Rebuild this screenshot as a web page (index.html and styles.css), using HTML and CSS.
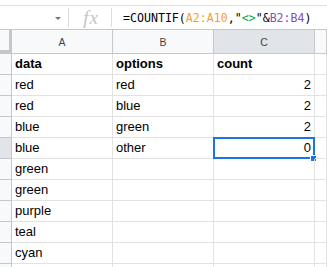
FILE: index.html
```html
<!DOCTYPE html>
<html lang="en">
<head>
  <meta charset="UTF-8">
  <meta name="viewport" content="width=device-width, initial-scale=1.0">
  <title>Sheet - COUNTIF</title>
  <link rel="stylesheet" href="styles.css">
</head>
<body>
  <div class="top-strip"></div>

  <div class="formula-bar">
    <div class="name-box"><span class="caret"></span></div>
    <div class="fx">fx</div>
    <div class="formula">=COUNTIF(<span class="ref-a">A2:A10</span>,"<span class="str">&lt;&gt;</span>"&amp;<span class="ref-b">B2:B4</span>)</div>
  </div>

  <div class="sheet">
    <div class="row head">
      <div class="corner"></div>
      <div class="col-h">A</div>
      <div class="col-h">B</div>
      <div class="col-h selected">C</div>
      <div class="col-h"></div>
    </div>

    <div class="row">
      <div class="row-h"></div>
      <div class="cell bold">data</div>
      <div class="cell bold">options</div>
      <div class="cell bold">count</div>
      <div class="cell"></div>
    </div>
    <div class="row">
      <div class="row-h"></div>
      <div class="cell">red</div>
      <div class="cell">red</div>
      <div class="cell num">2</div>
      <div class="cell"></div>
    </div>
    <div class="row">
      <div class="row-h"></div>
      <div class="cell">red</div>
      <div class="cell">blue</div>
      <div class="cell num">2</div>
      <div class="cell"></div>
    </div>
    <div class="row">
      <div class="row-h"></div>
      <div class="cell">blue</div>
      <div class="cell">green</div>
      <div class="cell num">2</div>
      <div class="cell"></div>
    </div>
    <div class="row">
      <div class="row-h selected"></div>
      <div class="cell">blue</div>
      <div class="cell">other</div>
      <div class="cell num active">0<span class="handle"></span></div>
      <div class="cell"></div>
    </div>
    <div class="row">
      <div class="row-h"></div>
      <div class="cell">green</div>
      <div class="cell"></div>
      <div class="cell"></div>
      <div class="cell"></div>
    </div>
    <div class="row">
      <div class="row-h"></div>
      <div class="cell">green</div>
      <div class="cell"></div>
      <div class="cell"></div>
      <div class="cell"></div>
    </div>
    <div class="row">
      <div class="row-h"></div>
      <div class="cell">purple</div>
      <div class="cell"></div>
      <div class="cell"></div>
      <div class="cell"></div>
    </div>
    <div class="row">
      <div class="row-h"></div>
      <div class="cell">teal</div>
      <div class="cell"></div>
      <div class="cell"></div>
      <div class="cell"></div>
    </div>
    <div class="row">
      <div class="row-h"></div>
      <div class="cell">cyan</div>
      <div class="cell"></div>
      <div class="cell"></div>
      <div class="cell"></div>
    </div>
    <div class="row">
      <div class="row-h"></div>
      <div class="cell"></div>
      <div class="cell"></div>
      <div class="cell"></div>
      <div class="cell"></div>
    </div>
  </div>
</body>
</html>
```

FILE: styles.css
```css
* {
  box-sizing: border-box;
  margin: 0;
  padding: 0;
}

body {
  font-family: 'Liberation Sans', Arial, sans-serif;
  background-color: #ffffff;
  width: 327px;
  height: 267px;
  overflow: hidden;
}

.top-strip {
  height: 5px;
}

/* formula bar */
.formula-bar {
  height: 25px;
  display: flex;
  align-items: center;
  border-top: 1px solid #e0e0e0;
  border-bottom: 1px solid #c7c7c7;
}

.name-box {
  width: 69px;
  height: 19px;
  display: flex;
  align-items: center;
  justify-content: flex-end;
  padding-right: 7px;
  border-right: 1px solid #dadce0;
}

.caret {
  width: 0;
  height: 0;
  border-left: 3px solid transparent;
  border-right: 3px solid transparent;
  border-top: 3px solid #777;
  margin-top: 2px;
}

.fx {
  width: 43px;
  height: 19px;
  display: flex;
  align-items: center;
  justify-content: center;
  padding-left: 2px;
  border-right: 1px solid #dadce0;
  font-family: 'Liberation Serif', serif;
  font-style: italic;
  font-size: 19px;
  color: #c4c4c4;
  letter-spacing: 1px;
}

.formula {
  padding-left: 11px;
  font-family: 'DejaVu Sans Mono', monospace;
  font-size: 11.6px;
  color: #000;
  white-space: nowrap;
}

.ref-a {
  color: #f6a21d;
}

.str {
  color: #12a53a;
}

.ref-b {
  color: #8a4fbf;
}

/* grid */
.sheet {
  height: 237px;
  overflow: hidden;
}

.row {
  display: grid;
  grid-template-columns: 12px 101px 101px 101px 1fr;
  height: 21px;
}

.row.head {
  height: 24px;
}

.corner {
  background-color: #f8f9fa;
  border-right: 3px solid #c4c7c5;
  border-bottom: 4px solid #c4c7c5;
}

.col-h {
  display: flex;
  align-items: center;
  justify-content: center;
  background-color: #f8f9fa;
  border-right: 1px solid #c7c7c7;
  border-bottom: 1px solid #c7c7c7;
  font-size: 10.5px;
  color: #444;
}

.col-h.selected {
  background-color: #e1e4e8;
}

.row-h {
  background-color: #f8f9fa;
  border-right: 1px solid #c7c7c7;
  border-bottom: 1px solid #c7c7c7;
}

.row-h.selected {
  background-color: #e1e4e8;
}

.cell {
  position: relative;
  border-right: 1px solid #e2e2e2;
  border-bottom: 1px solid #e2e2e2;
  padding: 0 3px;
  font-size: 13px;
  line-height: 20px;
  color: #000;
  white-space: nowrap;
}

.cell.bold {
  font-weight: bold;
}

.cell.num {
  text-align: right;
}

.cell.active::before {
  content: '';
  position: absolute;
  top: -1px;
  left: -1px;
  right: -1px;
  bottom: -1px;
  border: 2px solid #1a73e8;
}

.handle {
  position: absolute;
  right: -3px;
  bottom: -4px;
  width: 7px;
  height: 7px;
  background-color: #1a73e8;
  border: 1px solid #ffffff;
}
```
